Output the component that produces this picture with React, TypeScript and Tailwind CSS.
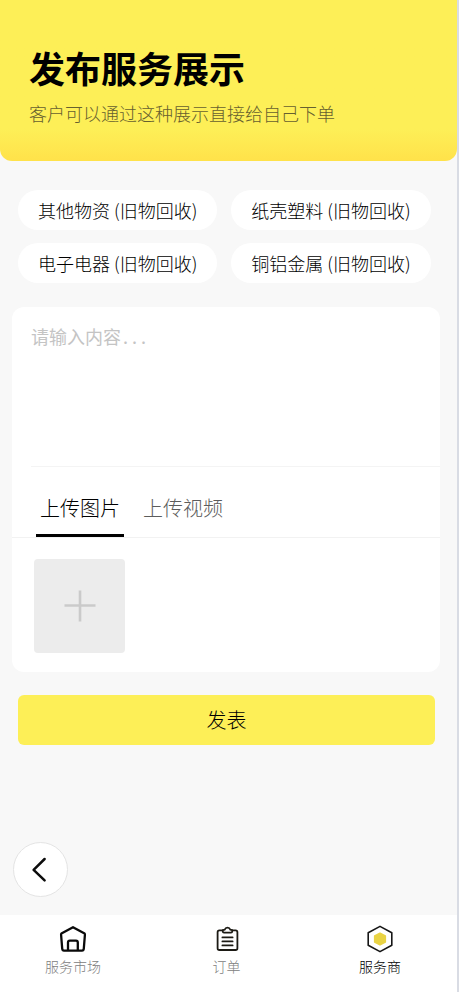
import { useState } from "react";

const categories = [
  "其他物资 (旧物回收)",
  "纸壳塑料 (旧物回收)",
  "电子电器 (旧物回收)",
  "铜铝金属 (旧物回收)",
];

const tabs = ["上传图片", "上传视频"];

function HomeIcon() {
  return (
    <svg width="28" height="28" viewBox="0 0 28 28" fill="none" stroke="#0a0a0a" strokeWidth="2.3" strokeLinejoin="round" aria-hidden="true">
      <path d="M14 2.2 25.6 8.6Q26 9 25.9 10L24.8 23.6Q24.6 25.6 23 25.6H5Q3.4 25.6 3.2 23.6L2.1 10Q2 9 2.4 8.6Z" />
      <path d="M9 25.6V17.4Q9 15.6 10.8 15.6H17Q18.8 15.6 18.8 17.4V25.6" />
    </svg>
  );
}

function OrderIcon() {
  return (
    <svg width="28" height="28" viewBox="0 0 28 28" fill="none" stroke="#1c1a14" strokeWidth="1.8" strokeLinejoin="round" strokeLinecap="round" aria-hidden="true">
      <path d="M9.4 5.4H6.4Q4.6 5.4 4.6 7.2V23.2Q4.6 25 6.4 25H22.6Q24.4 25 24.4 23.2V7.2Q24.4 5.4 22.6 5.4H19.6" />
      <path d="M9.8 5.2 11.8 4.6Q12.4 2.6 14.5 2.6T17.2 4.6L19.2 5.2V6.4Q19.2 7.6 18 7.6H11Q9.8 7.6 9.8 6.4Z" />
      <path d="M9.4 12.4H19.6M9.4 16.4H19.6M9.4 20.4H19.6" />
    </svg>
  );
}

function ProviderIcon() {
  return (
    <svg width="28" height="28" viewBox="0 0 28 28" strokeLinejoin="round" aria-hidden="true">
      <path d="M14 1.4 25.8 7.8V20.2L14 26.6 2.2 20.2V7.8Z" fill="none" stroke="#161616" strokeWidth="1.6" />
      <path d="M14 8.2 19.3 11V17L14 19.8 8.7 17V11Z" fill="#e9d344" stroke="#e9d344" strokeWidth="1.6" />
    </svg>
  );
}

const navItems = [
  { label: "服务市场", Icon: HomeIcon, active: false },
  { label: "订单", Icon: OrderIcon, active: false },
  { label: "服务商", Icon: ProviderIcon, active: true },
];

export default function App() {
  const [tab, setTab] = useState(0);

  return (
    <div className="flex min-h-screen flex-col border-r-2 border-[#d9dce4] bg-[#f8f8f8] font-['Noto_Sans_CJK_SC',sans-serif] font-light text-black">
      <header className="rounded-b-xl bg-linear-to-b from-[#fdef57] from-80% to-[#ffe24a] px-[29px] pt-[43px] pb-[34px]">
        <h1 className="text-4xl leading-[48px] font-bold">发布服务展示</h1>
        <p className="mt-2 text-lg leading-7 text-[#66602f]">客户可以通过这种展示直接给自己下单</p>
      </header>

      <main className="flex flex-1 flex-col">
        <div className="flex flex-wrap gap-x-[14px] gap-y-[13px] px-[18px] pt-[29px]">
          {categories.map((name) => (
            <button key={name} type="button" className="h-10 rounded-full bg-white px-5 text-lg">
              {name}
            </button>
          ))}
        </div>

        <section className="mt-6 mr-[17px] ml-3 rounded-xl bg-white pb-[19px]">
          <div className="ml-[19px] border-b border-[#f4f4f4]">
            <textarea
              aria-label="服务内容"
              placeholder="请输入内容..."
              className="block h-[159px] w-full resize-none bg-transparent pt-[15px] font-['Noto_Sans_Mono_CJK_SC','Noto_Sans_CJK_SC',monospace] text-lg outline-none placeholder:text-[#c4c4c4]"
            />
          </div>
          <div role="tablist" className="flex gap-[15px] border-b border-[#f2f2f2] px-6 pt-3">
            {tabs.map((name, i) => (
              <button
                key={name}
                type="button"
                role="tab"
                aria-selected={tab === i}
                onClick={() => setTab(i)}
                className={
                  tab === i
                    ? "h-[58px] border-b-3 border-black px-1 pt-[2px] text-xl text-black"
                    : "h-[58px] border-b-3 border-transparent px-1 pt-[2px] text-xl text-[#5c5c5c]"
                }
              >
                {name}
              </button>
            ))}
          </div>
          <button
            type="button"
            aria-label="添加图片"
            className="mt-[21px] ml-[22px] flex h-[94px] w-[91px] items-center justify-center rounded-sm bg-[#ececec]"
          >
            <svg width="32" height="32" viewBox="0 0 32 32" stroke="#cacaca" strokeWidth="2.6" aria-hidden="true">
              <path d="M16 0.5V31.5M0.5 15.5H31.5" />
            </svg>
          </button>
        </section>

        <button type="button" className="mt-[23px] mr-[22px] ml-[18px] h-[50px] rounded-md bg-[#fdef57] text-xl">
          发表
        </button>

        <button
          type="button"
          aria-label="返回"
          className="mt-auto mb-[18px] ml-[13px] flex size-[55px] items-center justify-center rounded-full border border-[#e4e4e4] bg-white"
        >
          <svg width="28" height="28" viewBox="0 0 28 28" fill="none" stroke="#0c0c0c" strokeWidth="2.5" strokeLinecap="round" strokeLinejoin="round" aria-hidden="true">
            <path d="M17.6 3 6.6 13.8 17.6 24.4" />
          </svg>
        </button>
      </main>

      <nav className="flex h-[77px] justify-between bg-white pt-[10px] pr-[49px] pl-[45px]">
        {navItems.map(({ label, Icon, active }) => (
          <a
            key={label}
            href="#"
            aria-current={active ? "page" : undefined}
            className={
              active
                ? "flex w-14 flex-col items-center gap-[3px] text-sm leading-5 text-black"
                : "flex w-14 flex-col items-center gap-[3px] text-sm leading-5 text-[#808080]"
            }
          >
            <Icon />
            {label}
          </a>
        ))}
      </nav>
    </div>
  );
}
